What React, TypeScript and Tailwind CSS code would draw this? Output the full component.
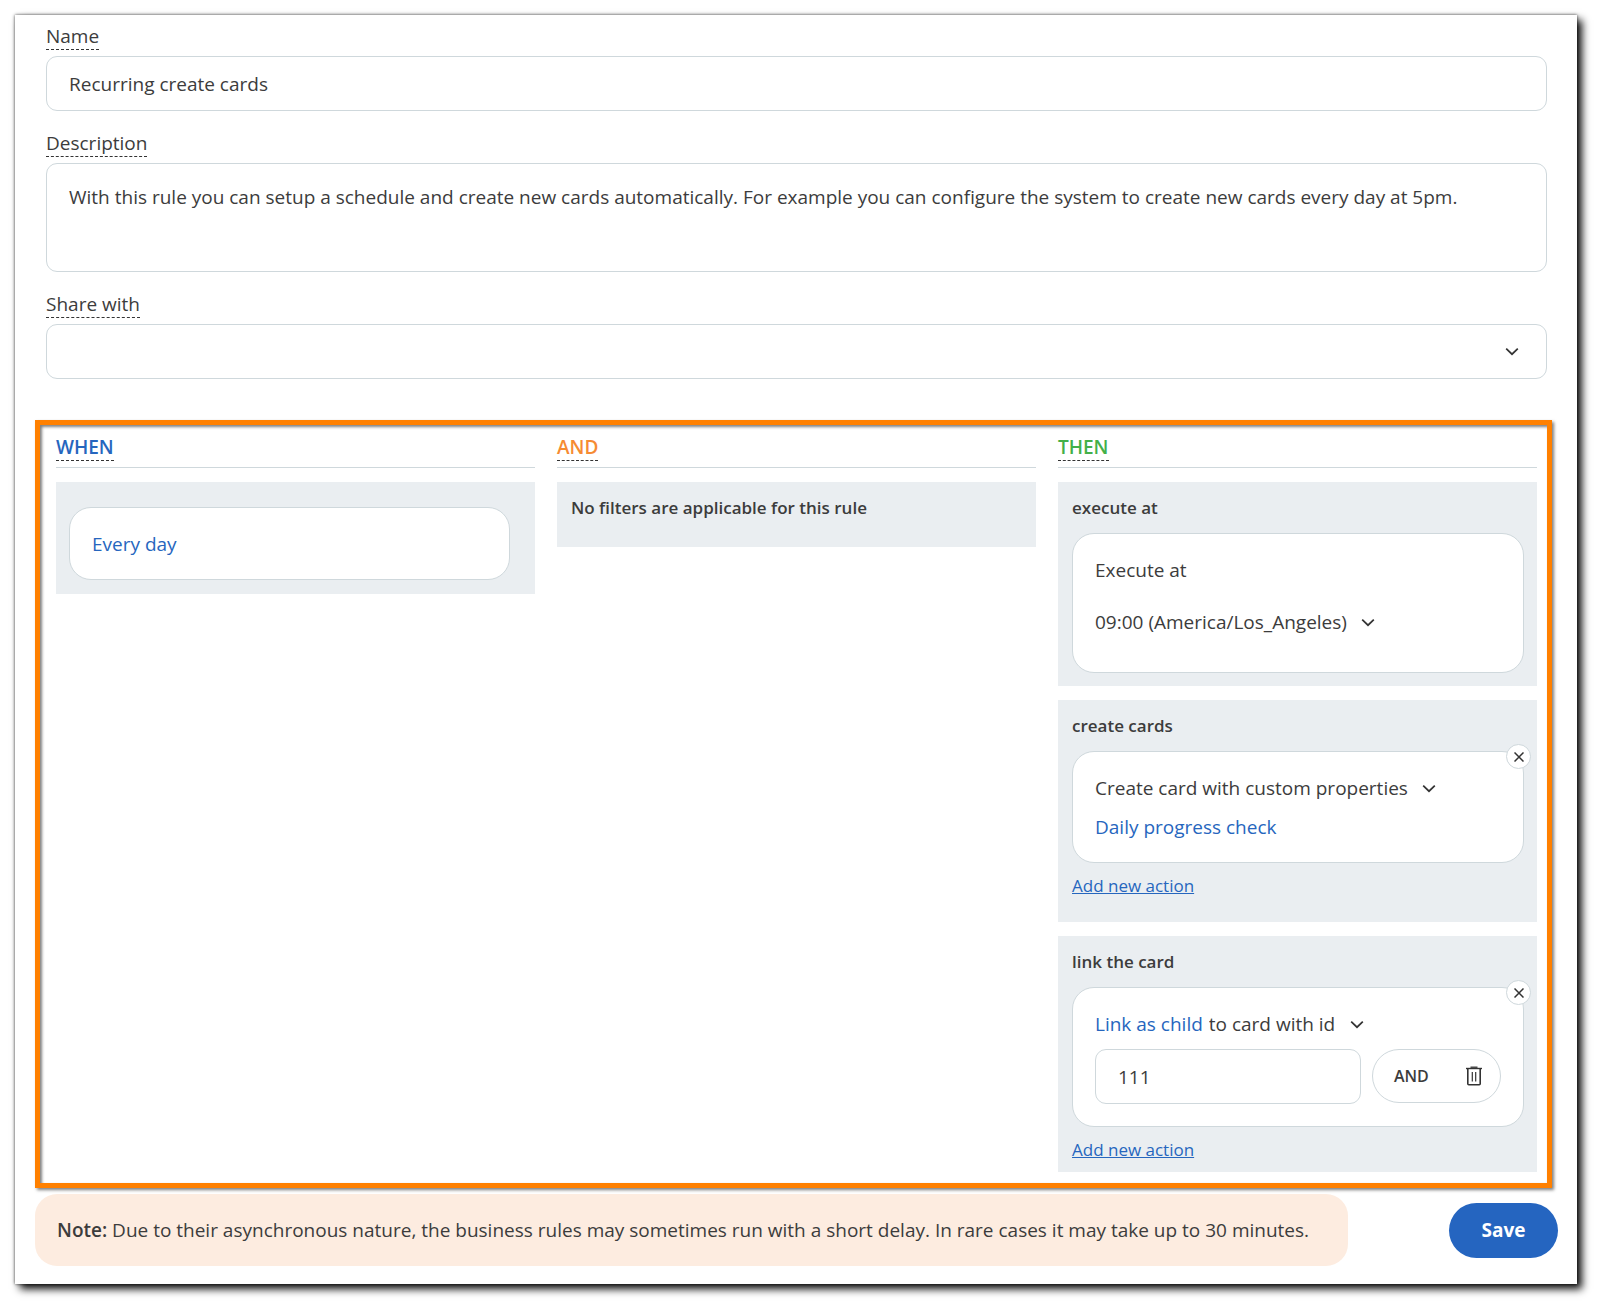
import { useState } from "react";
import type { ReactNode } from "react";

function Chevron({ className = "" }: { className?: string }) {
  return (
    <svg
      className={`pointer-events-none h-2 w-3.5 ${className}`}
      viewBox="0 0 14 8"
      fill="none"
      stroke="#333333"
      strokeWidth="1.7"
      aria-hidden="true"
    >
      <path d="M1.2 0.6 7 6.2 12.8 0.6" />
    </svg>
  );
}

function TrashIcon() {
  return (
    <svg className="h-5 w-4" viewBox="0 0 16 20" fill="none" stroke="#333333" aria-hidden="true">
      <path d="M0 2.5h16" strokeWidth="1.4" />
      <path d="M4.5 1.2h7" strokeWidth="1.3" />
      <path d="M1.8 2.5v15.2a1 1 0 0 0 1 1h10.4a1 1 0 0 0 1-1V2.5" strokeWidth="1.6" />
      <path d="M6.3 6v9.5M9.7 6v9.5" strokeWidth="1.2" />
    </svg>
  );
}

function InlineSelect({ label, options }: { label: string; options: string[] }) {
  return (
    <span className="relative inline-flex items-center">
      <select
        aria-label={label}
        className="h-[39px] appearance-none bg-transparent pr-7 text-[19px] outline-none"
      >
        {options.map((option) => (
          <option key={option}>{option}</option>
        ))}
      </select>
      <Chevron className="absolute right-0" />
    </span>
  );
}

function Column({ title, color, children }: { title: string; color: string; children: ReactNode }) {
  return (
    <section className="min-w-0 flex-1">
      <div className="mb-3.5 border-b border-[#cfd8dc] pb-1.5">
        <h2
          className={`w-fit border-b border-dashed border-[#333333] text-[19px] leading-[26px] font-semibold ${color}`}
        >
          {title}
        </h2>
      </div>
      <div className="flex flex-col gap-3.5">{children}</div>
    </section>
  );
}

function Block({ title, children }: { title: string; children?: ReactNode }) {
  return (
    <div className="bg-[#eaeef1] pt-3.5 pr-[13px] pl-3.5">
      <h3 className="mb-3.5 text-[17px] leading-[23px] font-semibold">{title}</h3>
      {children}
    </div>
  );
}

function Card({ children, onRemove }: { children: ReactNode; onRemove?: () => void }) {
  return (
    <div className="relative rounded-[22px] border border-[#cfd8dc] bg-white px-[22px] pt-[17px] pb-[15px] text-[19px] leading-[39px]">
      {children}
      {onRemove && (
        <button
          type="button"
          aria-label="Remove action"
          onClick={onRemove}
          className="absolute -top-2 -right-2 flex size-[25px] cursor-pointer items-center justify-center rounded-full border border-[#cfd8dc] bg-white"
        >
          <svg className="size-2.5" viewBox="0 0 10 10" stroke="#333333" strokeWidth="1.5" aria-hidden="true">
            <path d="M0.5 0.5 9.5 9.5M9.5 0.5 0.5 9.5" />
          </svg>
        </button>
      )}
    </div>
  );
}

const labelClass =
  "mb-1.5 block w-fit border-b border-dashed border-[#333333] text-[19px] leading-[26px]";
const fieldClass =
  "block w-full rounded-[11px] border border-[#cfd8dc] bg-white px-[22px] text-[19px] outline-none";
const addClass = "inline-block text-[17px] leading-[23px] text-[#2666be] underline";

export default function App() {
  const [name, setName] = useState("Recurring create cards");
  const [description, setDescription] = useState(
    "With this rule you can setup a schedule and create new cards automatically. For example you can configure the system to create new cards every day at 5pm."
  );
  const [cardId, setCardId] = useState("111");
  const [showCreate, setShowCreate] = useState(true);
  const [showLink, setShowLink] = useState(true);

  return (
    <div className="bg-white pt-[15px] pr-[27px] pb-[27px] pl-[15px] font-['Open_Sans','Noto_Sans',sans-serif] text-[#3c3c3c]">
      <form
        onSubmit={(e) => e.preventDefault()}
        className="bg-white pt-2 pb-[18px] shadow-[5px_5px_8px_rgba(0,0,0,0.95),0_0_3px_rgba(0,0,0,0.7)]"
      >
        <div className="flex flex-col gap-[19px] pr-[30px] pl-[31px]">
          <div>
            <label htmlFor="rule-name" className={labelClass}>
              Name
            </label>
            <input
              id="rule-name"
              type="text"
              className={`${fieldClass} h-[55px]`}
              value={name}
              onChange={(e) => setName(e.target.value)}
            />
          </div>
          <div>
            <label htmlFor="rule-description" className={labelClass}>
              Description
            </label>
            <textarea
              id="rule-description"
              className={`${fieldClass} h-[109px] resize-none pt-5 leading-[26px]`}
              value={description}
              onChange={(e) => setDescription(e.target.value)}
            />
          </div>
          <div>
            <label htmlFor="rule-share" className={labelClass}>
              Share with
            </label>
            <div className="relative flex items-center">
              <select id="rule-share" className={`${fieldClass} h-[55px] appearance-none`}>
                <option></option>
              </select>
              <Chevron className="absolute right-7" />
            </div>
          </div>
        </div>

        <div className="mt-[41px] mr-[25px] ml-5 flex gap-[22px] border-5 border-[#ff8000] pt-[9px] pr-2.5 pb-[11px] pl-4 shadow-[2px_2px_3px_rgba(0,0,0,0.5),inset_2px_2px_3px_rgba(0,0,0,0.5)]">
          <Column title="WHEN" color="text-[#2666be]">
            <div className="bg-[#eaeef1] pt-[25px] pr-[25px] pb-3.5 pl-[13px]">
              <Card>
                <a href="#schedule" className="block text-[#2666be]">
                  Every day
                </a>
              </Card>
            </div>
          </Column>

          <Column title="AND" color="text-[#f68b33]">
            <div className="bg-[#eaeef1] px-3.5 pt-3.5 pb-7">
              <p className="text-[17px] leading-[23px] font-semibold">
                No filters are applicable for this rule
              </p>
            </div>
          </Column>

          <Column title="THEN" color="text-[#43b049]">
            <Block title="execute at">
              <div className="pb-[13px]">
                <Card>
                  <p>Execute at</p>
                  <div className="flex pt-[13px] pb-[15px]">
                    <InlineSelect label="Execution time" options={["09:00 (America/Los_Angeles)"]} />
                  </div>
                </Card>
              </div>
            </Block>

            <Block title="create cards">
              {showCreate && (
                <Card onRemove={() => setShowCreate(false)}>
                  <div className="flex">
                    <InlineSelect label="Create action" options={["Create card with custom properties"]} />
                  </div>
                  <a href="#card" className="block w-fit text-[#2666be]">
                    Daily progress check
                  </a>
                </Card>
              )}
              <div className="flex pt-[11px] pb-[25px]">
                <a href="#add-create" className={addClass}>
                  Add new action
                </a>
              </div>
            </Block>

            <Block title="link the card">
              {showLink && (
                <Card onRemove={() => setShowLink(false)}>
                  <div className="flex gap-1.5">
                    <a href="#link-type" className="text-[#2666be]">
                      Link as child
                    </a>
                    <InlineSelect label="Link target" options={["to card with id"]} />
                  </div>
                  <div className="flex gap-[11px] pt-[5px] pb-[7px]">
                    <input
                      type="text"
                      aria-label="Card id"
                      className={`${fieldClass} h-[55px] min-w-0 flex-1`}
                      value={cardId}
                      onChange={(e) => setCardId(e.target.value)}
                    />
                    <div className="flex h-[54px] w-[129px] items-center justify-between rounded-full border border-[#cfd8dc] pr-[18px] pl-[21px]">
                      <button type="button" className="cursor-pointer text-base font-semibold">
                        AND
                      </button>
                      <button type="button" aria-label="Delete card id" className="cursor-pointer">
                        <TrashIcon />
                      </button>
                    </div>
                  </div>
                </Card>
              )}
              <div className="flex pt-[11px] pb-[11px]">
                <a href="#add-link" className={addClass}>
                  Add new action
                </a>
              </div>
            </Block>
          </Column>
        </div>

        <div className="mt-1.5 mr-[19px] ml-5 flex items-center gap-[101px]">
          <p className="flex-1 rounded-[22px] bg-[#fdece0] px-[22px] py-[23px] text-[19px] leading-[26px]">
            <strong className="font-semibold">Note:</strong> Due to their asynchronous nature, the business rules
            may sometimes run with a short delay. In rare cases it may take up to 30 minutes.
          </p>
          <button
            type="submit"
            className="h-[55px] w-[109px] shrink-0 cursor-pointer rounded-full bg-[#2565c0] text-[19px] font-bold text-white"
          >
            Save
          </button>
        </div>
      </form>
    </div>
  );
}
